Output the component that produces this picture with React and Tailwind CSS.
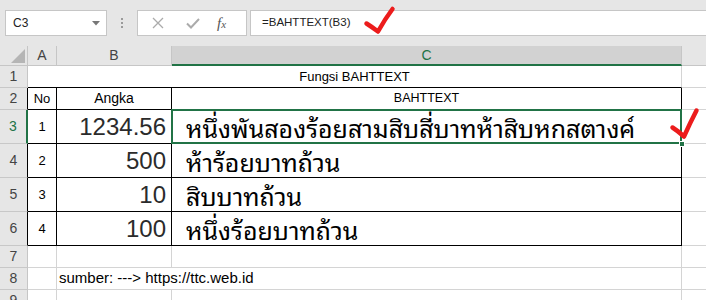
import React from 'react';

const GRID = 'border-[#d4d4d4]';

const RowHead = ({ n, active, dark }) => (
    <div
        className={`flex items-center justify-center bg-[#e6e6e6] border-b border-[#c8c8c8] text-[14px] ${
            active
                ? 'bg-[#e1e1e1] text-[#217346] border-r-2 border-r-[#217346]'
                : dark
                ? 'text-[#444] border-r border-r-black'
                : 'text-[#444] border-r border-r-[#c6c6c6]'
        }`}
    >
        {n}
    </div>
);

const Box = ({ children, className = '' }) => (
    <div className={`border-r border-b border-black flex items-center ${className}`}>{children}</div>
);

const Empty = ({ className = '' }) => <div className={`border-r border-b ${GRID} ${className}`}></div>;

const thai = "font-['Noto_Sans_Thai_Looped','Noto_Sans_Thai','Noto_Sans','DejaVu_Sans',sans-serif] text-black text-[25px] leading-[32px]";
const big = 'justify-end pr-[5px] text-[24px] text-[#2b2b2b]';

const rows = [
    { n: 2, no: '2', angka: '500', text: 'ห้าร้อยบาทถ้วน' },
    { n: 3, no: '3', angka: '10', text: 'สิบบาทถ้วน' },
    { n: 4, no: '4', angka: '100', text: 'หนึ่งร้อยบาทถ้วน' },
];

const App = () => {
    return (
        <div className="relative w-[706px] h-[300px] overflow-hidden bg-white font-['Liberation_Sans',Arial,sans-serif]">
            {/* barre de formule */}
            <div className="h-[46px] bg-[#e6e6e6] pt-[10px] flex items-start">
                <div className="ml-[5px] w-[102px] h-[26px] bg-white border border-[#c6c6c6] flex items-center justify-between pl-[7px] pr-[6px]">
                    <span className="text-[12px] text-[#222]">C3</span>
                    <svg width="8" height="5" viewBox="0 0 8 5">
                        <path d="M0 0 L8 0 L4 4.5 Z" fill="#777" />
                    </svg>
                </div>
                <div className="w-[30px] h-[26px] flex flex-col items-center justify-center gap-[2px]">
                    <span className="w-[2px] h-[2px] bg-[#9a9a9a]"></span>
                    <span className="w-[2px] h-[2px] bg-[#9a9a9a]"></span>
                    <span className="w-[2px] h-[2px] bg-[#9a9a9a]"></span>
                </div>
                <div className="w-[110px] h-[26px] bg-white border border-[#c6c6c6] flex items-center pl-[14px]">
                    <svg width="12" height="12" viewBox="0 0 12 12">
                        <path d="M1 1 L11 11 M11 1 L1 11" stroke="#ababab" strokeWidth="1.3" />
                    </svg>
                    <svg className="ml-[22px]" width="14" height="11" viewBox="0 0 14 11">
                        <path d="M1 5.5 L5 9.5 L13 1" stroke="#ababab" strokeWidth="2" fill="none" />
                    </svg>
                    <span className="ml-[17px] font-['Liberation_Serif',serif] italic text-[15px] text-[#555] leading-none">
                        f<span className="text-[11px]">x</span>
                    </span>
                </div>
                <div className="ml-[3px] flex-1 h-[26px] bg-white border-y border-l border-[#c6c6c6] flex items-center pl-[11px]">
                    <span className="text-[11.5px] text-[#222]">=BAHTTEXT(B3)</span>
                </div>
            </div>

            {/* feuille */}
            <div className="grid grid-cols-[28px_29px_115px_510px_1fr] grid-rows-[20px_22px_22px_34px_34px_34px_34px_22px_22px_22px]">
                {/* en-têtes de colonnes */}
                <div className="relative bg-[#e6e6e6] border-r border-b border-[#c6c6c6]">
                    <svg className="absolute right-[2px] bottom-[2px]" width="14" height="14" viewBox="0 0 14 14">
                        <path d="M14 0 L14 14 L0 14 Z" fill="#b5b5b5" />
                    </svg>
                </div>
                <div className="bg-[#e6e6e6] border-r border-b border-[#c6c6c6] flex items-center justify-center text-[14px] text-[#444]">A</div>
                <div className="bg-[#e6e6e6] border-r border-b border-[#c6c6c6] flex items-center justify-center text-[14px] text-[#444]">B</div>
                <div className="bg-[#d2d2d2] border-r border-r-[#c6c6c6] border-b-2 border-b-[#217346] flex items-center justify-center text-[14px] text-[#217346]">C</div>
                <div className="bg-[#e6e6e6] border-b border-[#c6c6c6]"></div>

                {/* 1 */}
                <RowHead n={1} />
                <div className={`col-span-3 border-b border-b-black border-r ${GRID} flex items-center justify-center text-[13px] text-black`}>
                    Fungsi BAHTTEXT
                </div>
                <div className={`border-b ${GRID}`}></div>

                {/* 2 */}
                <RowHead n={2} dark />
                <Box className="justify-center text-[13px]">No</Box>
                <Box className="justify-center text-[14px]">Angka</Box>
                <Box className="justify-center text-[12.5px]">BAHTTEXT</Box>
                <div className={`border-b ${GRID}`}></div>

                {/* 3 */}
                <RowHead n={3} active />
                <Box className="justify-center text-[13px]">1</Box>
                <Box className={big}>1234.56</Box>
                <Box className={`relative pl-[14px] ${thai}`}>
                    หนึ่งพันสองร้อยสามสิบสี่บาทห้าสิบหกสตางค์
                    <div className="absolute -left-px -top-px -right-px -bottom-px border-2 border-[#217346]"></div>
                    <div className="absolute -right-[4px] -bottom-[4px] w-[6px] h-[6px] bg-[#217346] border border-white"></div>
                </Box>
                <div className={`border-b ${GRID}`}></div>

                {rows.map((r) => (
                    <React.Fragment key={r.n}>
                        <RowHead n={r.n + 2} dark />
                        <Box className="justify-center text-[13px]">{r.no}</Box>
                        <Box className={big}>{r.angka}</Box>
                        <Box className={`pl-[14px] ${thai}`}>{r.text}</Box>
                        <div className={`border-b ${GRID}`}></div>
                    </React.Fragment>
                ))}

                {/* 7 */}
                <RowHead n={7} />
                <Empty />
                <Empty />
                <Empty />
                <div className={`border-b ${GRID}`}></div>

                {/* 8 */}
                <RowHead n={8} />
                <Empty />
                <div className={`col-span-2 border-r border-b ${GRID} flex items-center pl-[2px] text-[15px] text-black whitespace-nowrap`}>
                    sumber: ---&gt; https://ttc.web.id
                </div>
                <div className={`border-b ${GRID}`}></div>

                {/* 9 */}
                <RowHead n={9} />
                <Empty />
                <Empty />
                <Empty />
                <div className={`border-b ${GRID}`}></div>
            </div>

            {/* coches rouges */}
            <svg className="absolute left-0 top-0 pointer-events-none" width="706" height="300">
                <path d="M366.5 23.5 Q372 27 378 31.5 Q385 19 392.5 9" stroke="#ec1c1c" strokeWidth="4.5" fill="none" strokeLinecap="round" strokeLinejoin="round" />
                <path d="M672.5 127.5 Q678 131 684 136.5 Q690 123 696.5 110.5" stroke="#ec1c1c" strokeWidth="4.5" fill="none" strokeLinecap="round" strokeLinejoin="round" />
            </svg>
        </div>
    );
};

export default App;
